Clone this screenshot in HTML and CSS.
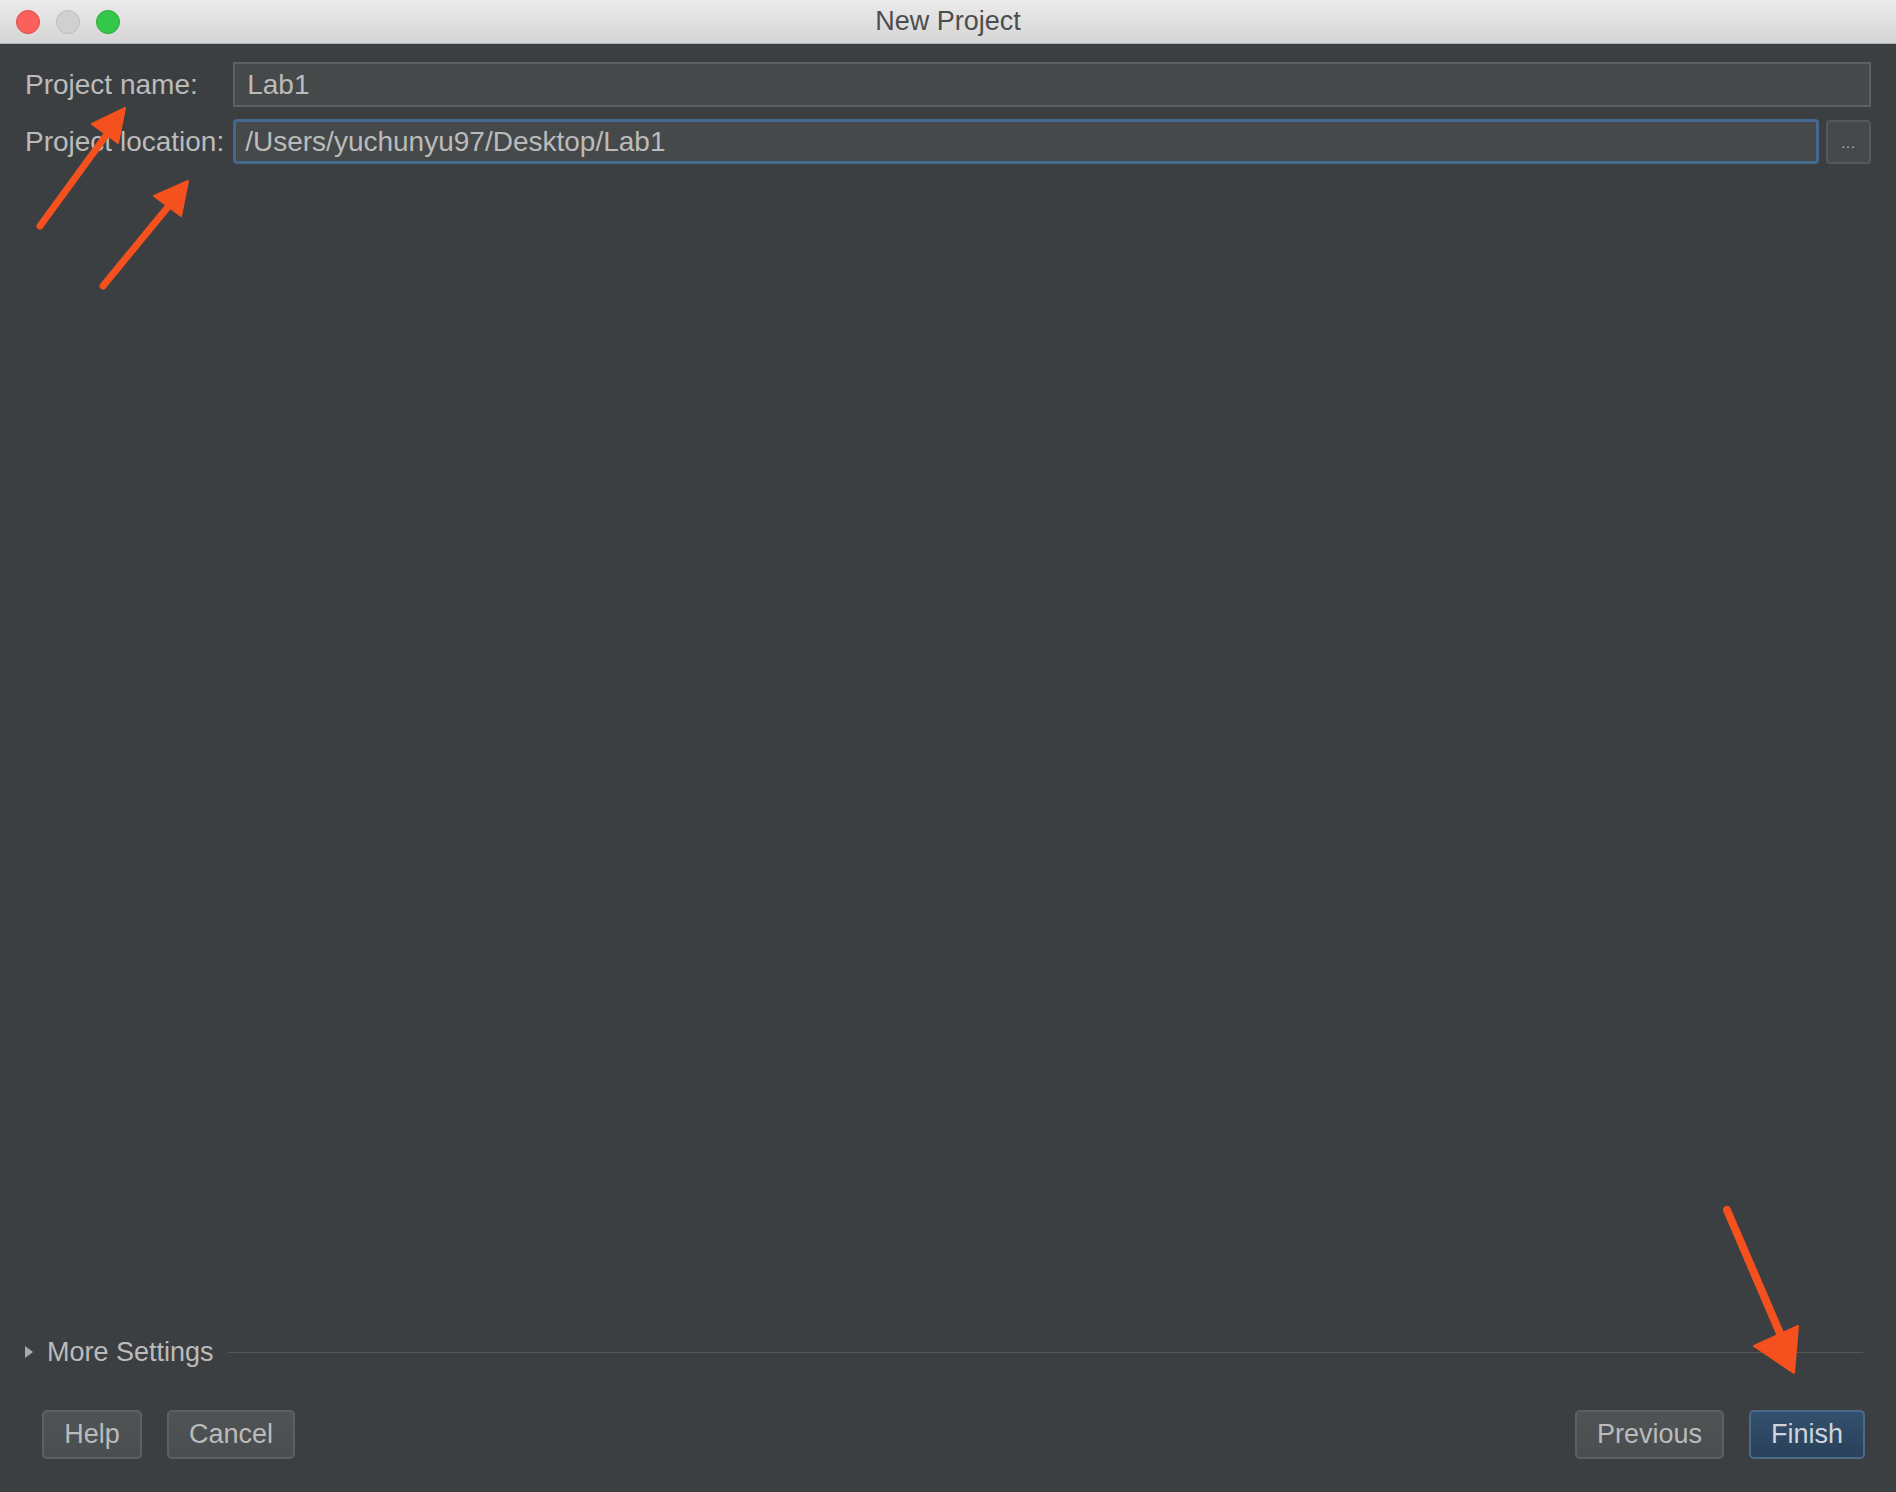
FILE: index.html
```html
<!DOCTYPE html>
<html lang="en">
<head>
    <meta charset="UTF-8">
    <title>New Project</title>
    <link rel="stylesheet" href="styles.css">
</head>
<body>
    <div class="window">
        <div class="titlebar">
            <div class="lights">
                <span class="light red"></span>
                <span class="light gray"></span>
                <span class="light green"></span>
            </div>
            <div class="title">New Project</div>
        </div>

        <div class="content">
            <form class="fields">
                <label for="name">Project name:</label>
                <input type="text" id="name" class="field wide" value="Lab1">

                <label for="location">Project location:</label>
                <input type="text" id="location" class="field focused" value="/Users/yuchunyu97/Desktop/Lab1">
                <button type="button" class="browse">...</button>
            </form>

            <div class="spacer"></div>

            <div class="more">
                <span class="caret"></span>
                <span class="more-label">More Settings</span>
                <span class="rule"></span>
            </div>

            <div class="actions">
                <div class="group">
                    <button class="btn">Help</button>
                    <button class="btn">Cancel</button>
                </div>
                <div class="group">
                    <button class="btn">Previous</button>
                    <button class="btn primary">Finish</button>
                </div>
            </div>
        </div>

        <svg class="arrows" width="1896" height="1492" viewBox="0 0 1896 1492">
            <g fill="#f4511e" stroke="#f4511e" stroke-linecap="round" stroke-linejoin="round">
                <line x1="40" y1="226" x2="110" y2="130" stroke-width="7"/>
                <polygon points="125,108 92,124 118,143" stroke-width="2"/>
                <line x1="103" y1="286" x2="172" y2="202" stroke-width="7"/>
                <polygon points="188,181 154,196 181,216" stroke-width="2"/>
                <line x1="1727" y1="1210" x2="1785" y2="1345" stroke-width="8"/>
                <polygon points="1794,1373 1798,1326 1754,1346" stroke-width="2"/>
            </g>
        </svg>
    </div>
</body>
</html>
```

FILE: styles.css
```css
body {
    margin: 0;
    padding: 0;
    background: #3c3f41;
    font-family: 'Liberation Sans', Arial, sans-serif;
}

.window {
    position: relative;
    width: 1896px;
    height: 1492px;
    display: flex;
    flex-direction: column;
    background: #3c3f41;
    color: #bbbbbb;
    overflow: hidden;
}

.titlebar {
    height: 43px;
    flex: none;
    display: flex;
    align-items: center;
    justify-content: center;
    position: relative;
    background: linear-gradient(#ebebeb, #d5d5d5);
    border-bottom: 1px solid #b1b1b1;
}

.lights {
    position: absolute;
    left: 16px;
    top: 10px;
    display: flex;
    gap: 16px;
}

.light {
    width: 24px;
    height: 24px;
    border-radius: 50%;
    box-sizing: border-box;
}

.red {
    background: #fc605c;
    border: 1px solid #de4a46;
}

.gray {
    background: #d0d0d0;
    border: 1px solid #bdbdbd;
}

.green {
    background: #34c84a;
    border: 1px solid #27a93a;
}

.title {
    font-size: 27px;
    color: #4d4d4d;
}

.content {
    flex: 1;
    display: flex;
    flex-direction: column;
    padding: 18px 25px 33px 25px;
}

.fields {
    display: grid;
    grid-template-columns: auto 1fr 45px;
    column-gap: 9px;
    row-gap: 12px;
    align-items: center;
    margin: 0;
}

.fields label {
    font-size: 28px;
    color: #bbbbbb;
}

.field {
    height: 45px;
    box-sizing: border-box;
    background: #45494a;
    border: 2px solid #5e6162;
    color: #bbbbbb;
    font-family: inherit;
    font-size: 28px;
    padding: 0 12px;
    outline: none;
}

.wide {
    grid-column: 2 / 4;
}

.focused {
    border: 3px solid #44688e;
    border-radius: 4px;
    padding: 0 9px;
    margin-right: -2px;
}

.browse {
    height: 44px;
    width: 45px;
    box-sizing: border-box;
    background: #45494a;
    border: 2px solid #55595a;
    border-radius: 4px;
    color: #bbbbbb;
    font-size: 14px;
    padding: 0;
    padding-top: 2px;
    letter-spacing: 1px;
}

.spacer {
    flex: 1;
}

.more {
    display: flex;
    align-items: center;
    height: 30px;
}

.caret {
    width: 0;
    height: 0;
    border-top: 6px solid transparent;
    border-bottom: 6px solid transparent;
    border-left: 8px solid #a9a9a9;
    margin-right: 14px;
}

.more-label {
    font-size: 27px;
    color: #bbbbbb;
}

.rule {
    flex: 1;
    height: 1px;
    background: #555859;
    margin-left: 14px;
    margin-right: 8px;
}

.actions {
    display: flex;
    justify-content: space-between;
    margin-top: 43px;
    padding: 0 6px 0 17px;
}

.group {
    display: flex;
    gap: 25px;
}

.btn {
    height: 49px;
    padding: 0 20px;
    min-width: 100px;
    box-sizing: border-box;
    background: linear-gradient(#4f5354, #4a4e50);
    border: 2px solid #5c6061;
    border-radius: 5px;
    color: #bbbbbb;
    font-family: inherit;
    font-size: 27px;
}

.primary {
    background: linear-gradient(#33506e, #29415a);
    border-color: #4b6a88;
    color: #d0d5da;
}

.arrows {
    position: absolute;
    left: 0;
    top: 0;
    pointer-events: none;
}
```
